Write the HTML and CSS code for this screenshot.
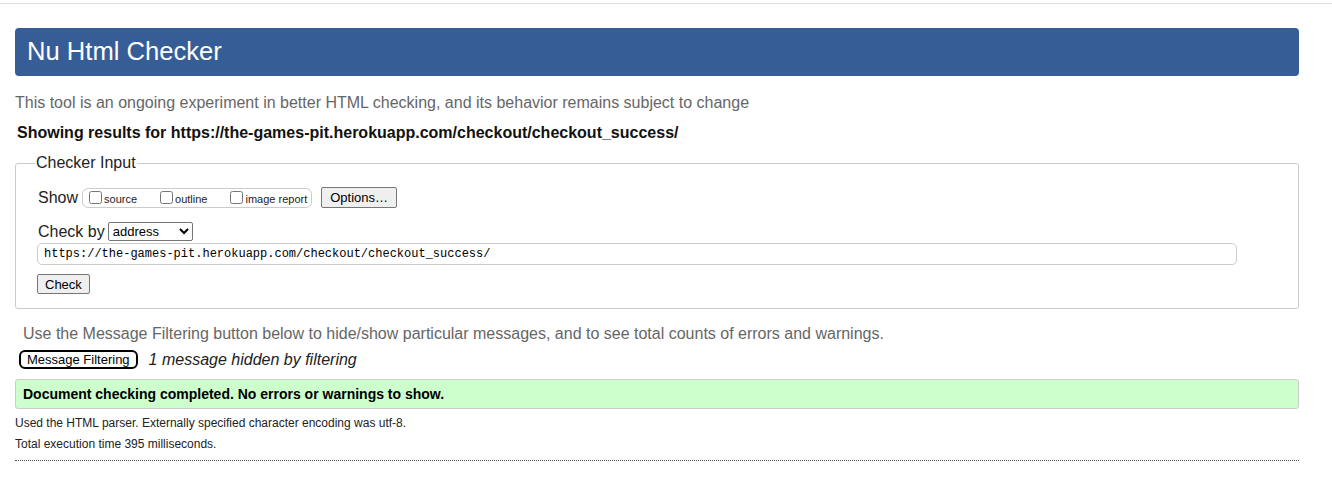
FILE: index.html
```html
<!DOCTYPE html>
<html lang="en">
<head>
    <meta charset="UTF-8">
    <title>Showing results for https://the-games-pit.herokuapp.com/checkout/checkout_success/ - Nu Html Checker</title>
    <link rel="stylesheet" href="styles.css">
</head>
<body>
    <div class="topline"></div>
    <div class="page">
        <h1>Nu Html Checker</h1>
        <p class="intro">This tool is an ongoing experiment in better HTML checking, and its behavior remains subject to change</p>
        <p class="showing">Showing results for https://the-games-pit.herokuapp.com/checkout/checkout_success/</p>

        <form>
            <fieldset>
                <legend>Checker Input</legend>
                <div class="row">
                    <span class="lbl">Show</span>
                    <span class="opts">
                        <label><input type="checkbox">source</label>
                        <label><input type="checkbox">outline</label>
                        <label><input type="checkbox">image report</label>
                    </span>
                    <button type="button" class="btn">Options…</button>
                </div>
                <div class="row">
                    <span class="lbl">Check by</span>
                    <select class="sel"><option>address</option></select>
                </div>
                <input class="url" type="text" value="https://the-games-pit.herokuapp.com/checkout/checkout_success/">
                <div><button type="button" class="btn">Check</button></div>
            </fieldset>
        </form>

        <p class="filter-note">Use the Message Filtering button below to hide/show particular messages, and to see total counts of errors and warnings.</p>
        <div class="filter-row">
            <button type="button" class="filter-btn">Message Filtering</button>
            <em>1 message hidden by filtering</em>
        </div>

        <p class="success">Document checking completed. No errors or warnings to show.</p>
        <p class="details">Used the HTML parser. Externally specified character encoding was utf-8.</p>
        <p class="details">Total execution time 395 milliseconds.</p>
        <hr class="end">
    </div>
</body>
</html>
```

FILE: styles.css
```css
body {
    margin: 0;
    font-family: "Liberation Sans", Arial, sans-serif;
    color: #222;
    background: #fff;
}
.topline {
    margin-top: 3px;
    border-top: 1px solid #ddd;
}
.page {
    margin: 0 33px 0 15px;
    padding-top: 24px;
}
h1 {
    margin: 0;
    height: 48px;
    padding-left: 12px;
    line-height: 46px;
    font-size: 25.6px;
    font-weight: normal;
    color: #fff;
    background-color: #365d95;
    border-radius: 4px;
}
.intro {
    margin: 17px 0 0 0;
    font-size: 16px;
    line-height: 20px;
    color: #666;
}
.showing {
    margin: 10px 0 0 2px;
    font-size: 16px;
    line-height: 20px;
    font-weight: bold;
    color: #111;
}
fieldset {
    margin: 11px 0 0 0;
    padding: 15px 21px 14px 22px;
    border: 1px solid #ccc;
    border-radius: 3px;
}
legend {
    padding: 0 1px;
    margin-left: -3px;
    font-size: 16px;
    color: #222;
}
.row {
    display: flex;
    align-items: center;
    margin-bottom: 14px;
}
.lbl {
    font-size: 16px;
    margin-right: 4px;
}
.opts {
    display: inline-flex;
    align-items: center;
    gap: 19px;
    height: 18px;
    padding: 0 4px 0 2px;
    border: 1px solid #ccc;
    border-radius: 6px;
    font-size: 11px;
}
.opts label {
    display: inline-flex;
    align-items: center;
    padding-top: 2px;
}
.opts input {
    margin: -3px 2px 0 4px;
    width: 13px;
    height: 13px;
}
.btn {
    font-family: "Liberation Sans", Arial, sans-serif;
    font-size: 13px;
    height: 21px;
    padding: 0 8px;
    background: #efefef;
    border: 1px solid #767676;
    border-radius: 2px;
    color: #000;
}
.row + .row {
    margin-bottom: 2px;
}
.sel {
    font-family: "Liberation Sans", Arial, sans-serif;
    font-size: 13px;
    height: 19px;
    width: 85px;
    margin-left: -1px;
    border: 1px solid #767676;
    border-radius: 2px;
    background: #fff;
    color: #000;
}
.url {
    display: block;
    box-sizing: border-box;
    width: 1200px;
    height: 22px;
    margin: 0 0 9px -1px;
    padding: 0 6px;
    font-family: "Liberation Mono", "Courier New", monospace;
    font-size: 12px;
    color: #000;
    border: 1px solid #ccc;
    border-radius: 5px;
}
fieldset .btn {
    margin-left: -1px;
    height: 20px;
    padding: 0 7px;
}
.row .btn {
    margin-left: 9px;
    padding: 0 8px;
    height: 21px;
}
.filter-note {
    margin: 15px 0 0 8px;
    font-size: 16px;
    line-height: 20px;
    color: #666;
}
.filter-row {
    display: flex;
    align-items: center;
    margin: 6px 0 0 4px;
}
.filter-btn {
    font-family: "Liberation Sans", Arial, sans-serif;
    font-size: 13px;
    height: 19px;
    padding: 0 6px;
    background: #fff;
    border: 2px solid #000;
    border-radius: 6px;
    color: #000;
}
.filter-row em {
    margin-left: 11px;
    font-size: 16px;
    color: #222;
}
.success {
    margin: 10px 0 0 0;
    height: 28px;
    line-height: 28px;
    padding-left: 7px;
    font-size: 14px;
    font-weight: bold;
    color: #000;
    background: #ccffcc;
    border: 1px solid #ccc;
    border-radius: 3px;
}
.details {
    margin: 6px 0 0 0;
    font-size: 12px;
    line-height: 16px;
    color: #222;
}
.details + .details {
    margin-top: 5px;
}
.end {
    margin: 8px 0 0 0;
    border: none;
    border-top: 1px dotted #555;
}
```
